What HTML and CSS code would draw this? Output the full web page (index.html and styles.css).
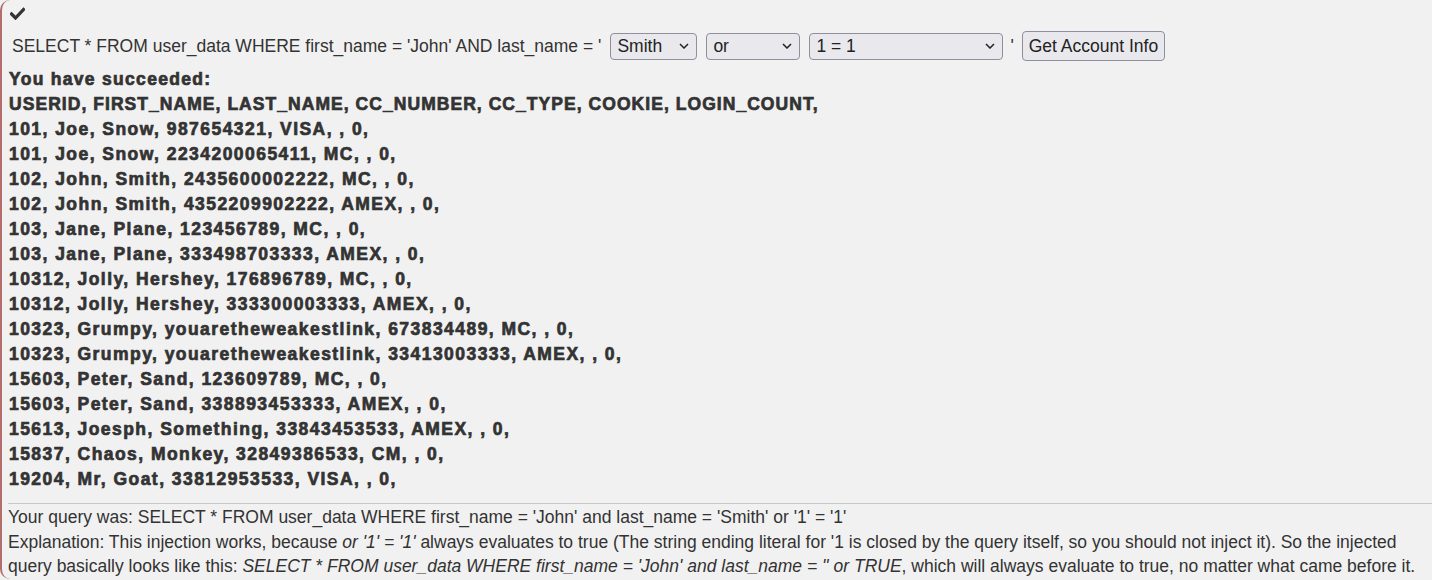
FILE: index.html
```html
<!DOCTYPE html>
<html>
<head>
<meta charset="utf-8">
<link rel="stylesheet" href="styles.css">
</head>
<body>
<div class="panel">
  <div class="check">
    <svg width="15" height="13" viewBox="0 0 15 13"><path d="M1.5 7 L5.5 11 L13.5 2.5" fill="none" stroke="#333" stroke-width="3.2" stroke-linecap="square"/></svg>
  </div>
  <form class="query">
    <span class="sql">SELECT * FROM user_data WHERE first_name = 'John' AND last_name = '</span>
    <select class="sel sel-name"><option>Smith</option></select>
    <select class="sel sel-op"><option>or</option></select>
    <select class="sel sel-cond"><option>1 = 1</option></select>
    <span class="quote">'</span>
    <button type="button" class="btn">Get Account Info</button>
  </form>
  <div class="output">
    <div class="title">You have succeeded:</div>
    <div class="head">USERID, FIRST_NAME, LAST_NAME, CC_NUMBER, CC_TYPE, COOKIE, LOGIN_COUNT,</div>
    <div>101, Joe, Snow, 987654321, VISA, , 0,</div>
    <div>101, Joe, Snow, 2234200065411, MC, , 0,</div>
    <div>102, John, Smith, 2435600002222, MC, , 0,</div>
    <div>102, John, Smith, 4352209902222, AMEX, , 0,</div>
    <div>103, Jane, Plane, 123456789, MC, , 0,</div>
    <div>103, Jane, Plane, 333498703333, AMEX, , 0,</div>
    <div>10312, Jolly, Hershey, 176896789, MC, , 0,</div>
    <div>10312, Jolly, Hershey, 333300003333, AMEX, , 0,</div>
    <div>10323, Grumpy, youaretheweakestlink, 673834489, MC, , 0,</div>
    <div>10323, Grumpy, youaretheweakestlink, 33413003333, AMEX, , 0,</div>
    <div>15603, Peter, Sand, 123609789, MC, , 0,</div>
    <div>15603, Peter, Sand, 338893453333, AMEX, , 0,</div>
    <div>15613, Joesph, Something, 33843453533, AMEX, , 0,</div>
    <div>15837, Chaos, Monkey, 32849386533, CM, , 0,</div>
    <div>19204, Mr, Goat, 33812953533, VISA, , 0,</div>
  </div>
  <hr class="divider">
  <div class="feedback">
    Your query was: SELECT * FROM user_data WHERE first_name = 'John' and last_name = 'Smith' or '1' = '1'<br>
    Explanation: This injection works, because <i>or '1' = '1'</i> always evaluates to true (The string ending literal for '1 is closed by the query itself, so you should not inject it). So the injected query basically looks like this: <i>SELECT * FROM user_data WHERE first_name = 'John' and last_name = '' or TRUE</i>, which will always evaluate to true, no matter what came before it.
  </div>
</div>
</body>
</html>
```

FILE: styles.css
```css
html, body {
  margin: 0;
  padding: 0;
  background: #f1f1f1;
}
body {
  font-family: "Liberation Sans", Arial, sans-serif;
  font-size: 17.5px;
  color: #333;
}
.panel {
  border-left: 2px solid #b46d6d;
  border-radius: 10px 0 0 10px;
  padding: 4px 0 0 6px;
  min-height: 574px;
  box-sizing: border-box;
}
.check {
  height: 18px;
  padding: 3px 0 0 2px;
}
.check svg { display: block; }
.query {
  display: flex;
  align-items: center;
  margin: 6px 0 0 4px;
  height: 30px;
}
.sql { margin-right: 9px; }
.sel {
  appearance: none;
  -webkit-appearance: none;
  font-family: "Liberation Sans", Arial, sans-serif;
  font-size: 17.5px;
  color: #222;
  height: 27px;
  padding: 0 0 0 6px;
  border: 1px solid #8f8f9d;
  border-radius: 4px;
  background-color: #e9e9ed;
  background-image: url("data:image/svg+xml;utf8,<svg xmlns='http://www.w3.org/2000/svg' width='10' height='6' viewBox='0 0 10 6'><path d='M1 1 L5 5 L9 1' fill='none' stroke='%23222' stroke-width='1.5'/></svg>");
  background-repeat: no-repeat;
  background-position: right 7px center;
  margin-right: 9px;
}
.sel-name { width: 87px; }
.sel-op { width: 94px; }
.sel-cond { width: 194px; margin-right: 7px; }
.quote { margin-right: 8px; }
.btn {
  font-family: "Liberation Sans", Arial, sans-serif;
  font-size: 17.5px;
  color: #222;
  height: 30px;
  padding: 0 6px;
  border: 1px solid #8f8f9d;
  border-radius: 4px;
  background: #e9e9ed;
}
.output {
  font-family: "Liberation Sans", Arial, sans-serif;
  font-weight: bold;
  font-size: 17.5px;
  letter-spacing: 1.45px;
  -webkit-text-stroke: 0.7px #333;
  line-height: 25px;
  margin-top: 6px;
  padding-left: 1px;
}
.output .title { letter-spacing: 1.3px; }
.output .head { letter-spacing: 1.05px; }
.divider {
  border: 0;
  border-top: 1px solid #c8c8c8;
  margin: 11px 0 1px 0;
}
.feedback {
  line-height: 24.5px;
  padding-right: 10px;
}
```
